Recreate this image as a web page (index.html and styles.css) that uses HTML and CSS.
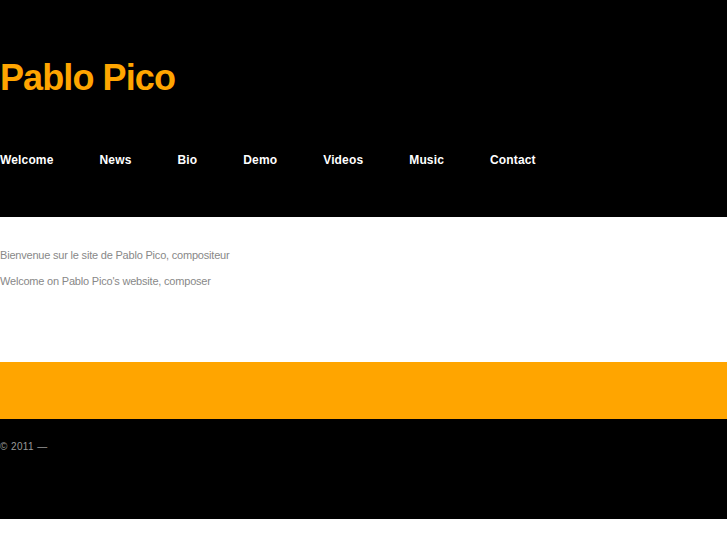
FILE: index.html
```html
<!DOCTYPE html>
<html lang="fr">
<head>
    <meta charset="UTF-8">
    <title>Pablo Pico</title>
    <link rel="stylesheet" href="styles.css">
</head>
<body>
    <div class="header">
        <h1 class="site-title">Pablo Pico</h1>
        <ul class="nav">
            <li><a href="#">Welcome</a></li>
            <li><a href="#">News</a></li>
            <li><a href="#">Bio</a></li>
            <li><a href="#">Demo</a></li>
            <li><a href="#">Videos</a></li>
            <li><a href="#">Music</a></li>
            <li><a href="#">Contact</a></li>
        </ul>
    </div>
    <div class="content">
        <p>Bienvenue sur le site de Pablo Pico, compositeur</p>
        <p>Welcome on Pablo Pico's website, composer</p>
    </div>
    <div class="band"></div>
    <div class="footer">
        <p>&copy; 2011 &mdash;</p>
    </div>
</body>
</html>
```

FILE: styles.css
```css
* {
    margin: 0;
    padding: 0;
    box-sizing: border-box;
}
body {
    font-family: "Liberation Sans", Arial, sans-serif;
    background: #fff;
}
.header {
    background: #000;
    height: 217px;
    padding-top: 57px;
}
.site-title {
    color: #ffa500;
    font-size: 36px;
    font-weight: bold;
    line-height: 42px;
    letter-spacing: -0.9px;
}
.nav {
    list-style: none;
    display: flex;
    margin-top: 51px;
}
.nav li {
    margin-right: 46px;
}
.nav a {
    color: #fff;
    text-decoration: none;
    font-size: 12px;
    font-weight: bold;
    line-height: 15px;
    letter-spacing: 0.15px;
}
.content {
    height: 145px;
    padding-top: 31px;
}
.content p {
    color: #888;
    font-size: 11px;
    line-height: 14px;
    margin-bottom: 12px;
    letter-spacing: -0.2px;
}
.band {
    background: #ffa500;
    height: 57px;
}
.footer {
    background: #000;
    height: 100px;
    padding-top: 22px;
}
.footer p {
    color: #999;
    font-size: 10px;
    line-height: 12px;
    letter-spacing: 0.4px;
}
```
